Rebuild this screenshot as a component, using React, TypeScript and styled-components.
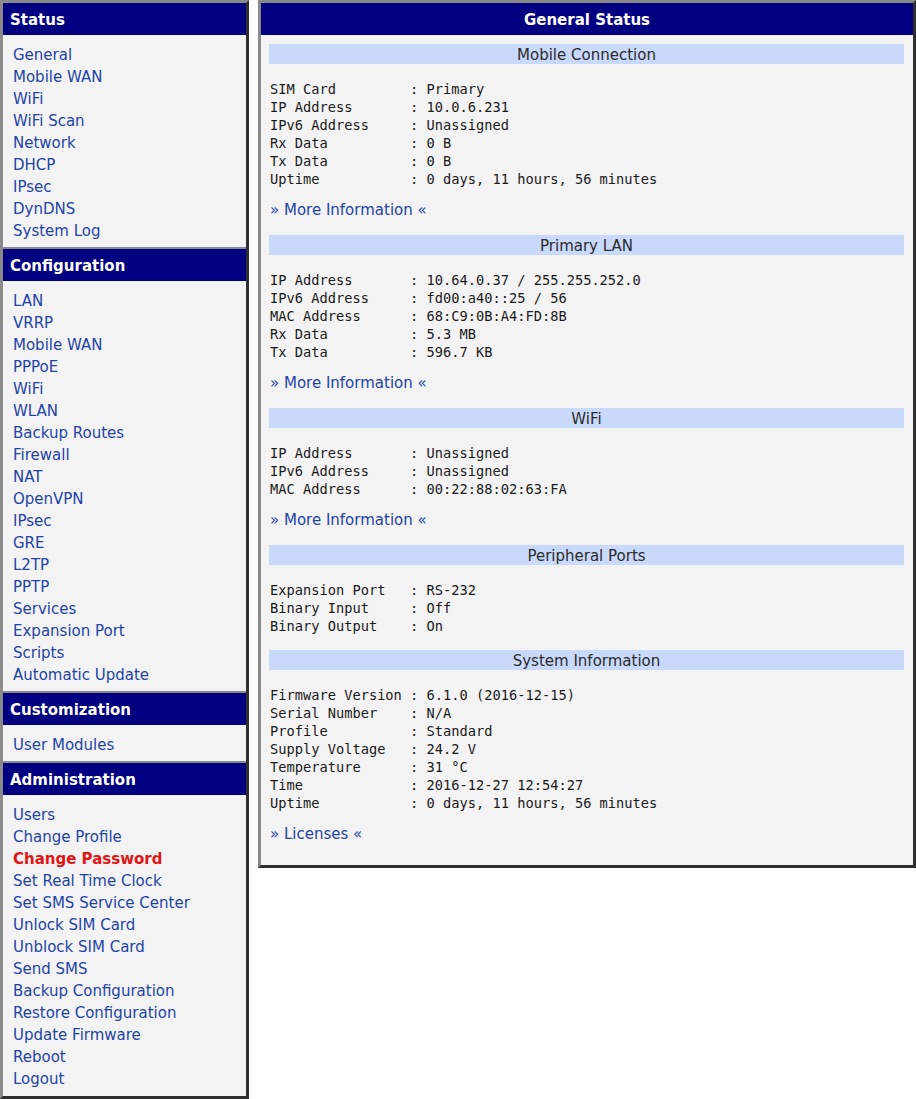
import { createGlobalStyle, styled } from "styled-components";

const GlobalStyle = createGlobalStyle`
  html, body {
    margin: 0;
    padding: 0;
    background: #ffffff;
  }
  body {
    font-family: "DejaVu Sans", Verdana, sans-serif;
  }
`;

const Page = styled.div`
  display: flex;
  align-items: flex-start;
  gap: 9px;
  width: 916px;
`;

const Frame = styled.div<{ $width: number }>`
  box-sizing: border-box;
  width: ${({ $width }) => $width}px;
  border: 3px solid #2f2f2f;
  border-top-color: #8a8a8a;
  border-left-color: #8a8a8a;
  background: #f3f3f3;
`;

const Header = styled.div<{ $center?: boolean }>`
  box-sizing: border-box;
  height: 32px;
  padding: 2px 7px 0;
  line-height: 30px;
  background: #000080;
  color: #ffffff;
  font-weight: bold;
  font-size: 15px;
  text-align: ${({ $center }) => ($center ? "center" : "left")};
`;

const MenuList = styled.div<{ $last?: boolean }>`
  display: flex;
  flex-direction: column;
  padding: 8px 10px ${({ $last }) => ($last ? "7px" : "6px")};
  border-bottom: ${({ $last }) => ($last ? "none" : "2px solid #8a8a8a")};
`;

const MenuLink = styled.a<{ $active?: boolean }>`
  box-sizing: border-box;
  height: 22px;
  padding-top: 2px;
  line-height: 20px;
  font-size: 15px;
  text-decoration: none;
  white-space: nowrap;
  color: ${({ $active }) => ($active ? "#e01515" : "#2343a5")};
  font-weight: ${({ $active }) => ($active ? "bold" : "normal")};
  cursor: pointer;
`;

const Content = styled.div`
  padding: 9px 9px 6px 8px;
`;

const Section = styled.div`
  margin-bottom: 15px;
`;

const SectionBar = styled.div`
  box-sizing: border-box;
  height: 20px;
  padding-top: 2px;
  line-height: 18px;
  background: #c9d9fb;
  color: #2b2b2b;
  font-size: 15px;
  text-align: center;
  margin-bottom: 16px;
`;

const DataBlock = styled.div`
  padding-left: 1px;
  font-family: "DejaVu Sans Mono", "Liberation Mono", monospace;
  font-size: 13.7px;
  line-height: 18px;
  color: #1a1a1a;
  white-space: pre;
`;

const MoreLink = styled.a`
  box-sizing: border-box;
  display: block;
  margin-top: 10px;
  padding: 2px 0 0 1px;
  height: 22px;
  line-height: 20px;
  font-size: 15px;
  color: #2343a5;
  text-decoration: none;
  cursor: pointer;
`;

const menu = [
  {
    title: "Status",
    links: [
      "General",
      "Mobile WAN",
      "WiFi",
      "WiFi Scan",
      "Network",
      "DHCP",
      "IPsec",
      "DynDNS",
      "System Log",
    ],
  },
  {
    title: "Configuration",
    links: [
      "LAN",
      "VRRP",
      "Mobile WAN",
      "PPPoE",
      "WiFi",
      "WLAN",
      "Backup Routes",
      "Firewall",
      "NAT",
      "OpenVPN",
      "IPsec",
      "GRE",
      "L2TP",
      "PPTP",
      "Services",
      "Expansion Port",
      "Scripts",
      "Automatic Update",
    ],
  },
  { title: "Customization", links: ["User Modules"] },
  {
    title: "Administration",
    links: [
      "Users",
      "Change Profile",
      "Change Password",
      "Set Real Time Clock",
      "Set SMS Service Center",
      "Unlock SIM Card",
      "Unblock SIM Card",
      "Send SMS",
      "Backup Configuration",
      "Restore Configuration",
      "Update Firmware",
      "Reboot",
      "Logout",
    ],
  },
];

const sections = [
  {
    title: "Mobile Connection",
    rows: [
      ["SIM Card", "Primary"],
      ["IP Address", "10.0.6.231"],
      ["IPv6 Address", "Unassigned"],
      ["Rx Data", "0 B"],
      ["Tx Data", "0 B"],
      ["Uptime", "0 days, 11 hours, 56 minutes"],
    ],
    link: "More Information",
  },
  {
    title: "Primary LAN",
    rows: [
      ["IP Address", "10.64.0.37 / 255.255.252.0"],
      ["IPv6 Address", "fd00:a40::25 / 56"],
      ["MAC Address", "68:C9:0B:A4:FD:8B"],
      ["Rx Data", "5.3 MB"],
      ["Tx Data", "596.7 KB"],
    ],
    link: "More Information",
  },
  {
    title: "WiFi",
    rows: [
      ["IP Address", "Unassigned"],
      ["IPv6 Address", "Unassigned"],
      ["MAC Address", "00:22:88:02:63:FA"],
    ],
    link: "More Information",
  },
  {
    title: "Peripheral Ports",
    rows: [
      ["Expansion Port", "RS-232"],
      ["Binary Input", "Off"],
      ["Binary Output", "On"],
    ],
  },
  {
    title: "System Information",
    rows: [
      ["Firmware Version", "6.1.0 (2016-12-15)"],
      ["Serial Number", "N/A"],
      ["Profile", "Standard"],
      ["Supply Voltage", "24.2 V"],
      ["Temperature", "31 °C"],
      ["Time", "2016-12-27 12:54:27"],
      ["Uptime", "0 days, 11 hours, 56 minutes"],
    ],
    link: "Licenses",
  },
];

export default function App() {
  return (
    <>
      <GlobalStyle />
      <Page>
        <Frame $width={249}>
          {menu.map((group, i) => (
            <div key={group.title}>
              <Header>{group.title}</Header>
              <MenuList $last={i === menu.length - 1}>
                {group.links.map((l) => (
                  <MenuLink key={l} $active={l === "Change Password"}>
                    {l}
                  </MenuLink>
                ))}
              </MenuList>
            </div>
          ))}
        </Frame>
        <Frame $width={658}>
          <Header $center>General Status</Header>
          <Content>
            {sections.map((s) => (
              <Section key={s.title}>
                <SectionBar>{s.title}</SectionBar>
                <DataBlock>
                  {s.rows.map(([k, v]) => `${k.padEnd(16, " ")} : ${v}`).join("\n")}
                </DataBlock>
                {s.link && <MoreLink>» {s.link} «</MoreLink>}
              </Section>
            ))}
          </Content>
        </Frame>
      </Page>
    </>
  );
}
